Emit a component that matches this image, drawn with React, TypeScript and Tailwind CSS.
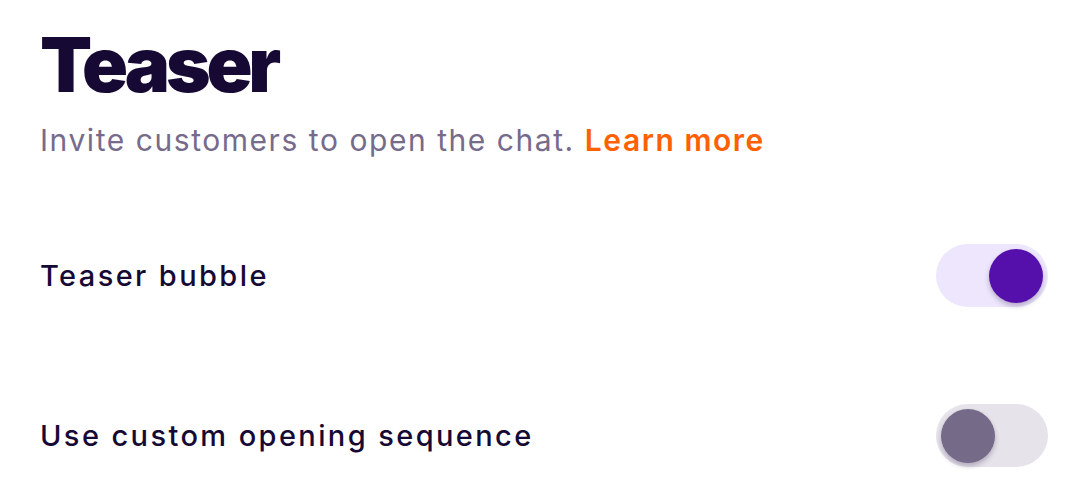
import { useState } from "react";

/* ---- Switch: pill track with round knob ---- */
function Switch({ on, onChange }: { on: boolean; onChange: (v: boolean) => void }) {
  return (
    <button
      type="button"
      role="switch"
      aria-checked={on}
      onClick={() => onChange(!on)}
      className={[
        "flex h-[63px] w-[112px] shrink-0 items-center rounded-full px-[5px]",
        on ? "justify-end bg-[#ede6fd]" : "justify-start bg-[#e6e3ea]",
      ].join(" ")}
    >
      <span
        className={[
          "block h-[54px] w-[54px] rounded-full shadow-[0_3px_5px_rgba(40,20,70,0.28)]",
          on ? "bg-[#5510ab]" : "bg-[#766a89]",
        ].join(" ")}
      />
    </button>
  );
}

export default function App() {
  const [bubble, setBubble] = useState(true);
  const [customSeq, setCustomSeq] = useState(false);

  return (
    <main
      className="min-h-screen bg-white px-10 pt-[26px] text-[#160a35]"
      style={{ fontFamily: "Inter, 'Noto Sans', sans-serif" }}
    >
      <h1 className="text-[76px] font-black leading-none tracking-[-0.055em]">Teaser</h1>
      <p className="mt-[23px] text-[30px] leading-none tracking-[1.55px] text-[#766b8a]">
        Invite customers to open the chat.{" "}
        <a href="#" className="font-semibold text-[#ff6100]">
          Learn more
        </a>
      </p>

      {/* Settings */}
      <div className="mt-[89px] flex items-center justify-between">
        <span className="text-[29px] font-medium tracking-[2.4px]">Teaser bubble</span>
        <Switch on={bubble} onChange={setBubble} />
      </div>
      <div className="mt-[97px] flex items-center justify-between">
        <span className="text-[29px] font-medium tracking-[2.4px]">Use custom opening sequence</span>
        <Switch on={customSeq} onChange={setCustomSeq} />
      </div>
    </main>
  );
}
